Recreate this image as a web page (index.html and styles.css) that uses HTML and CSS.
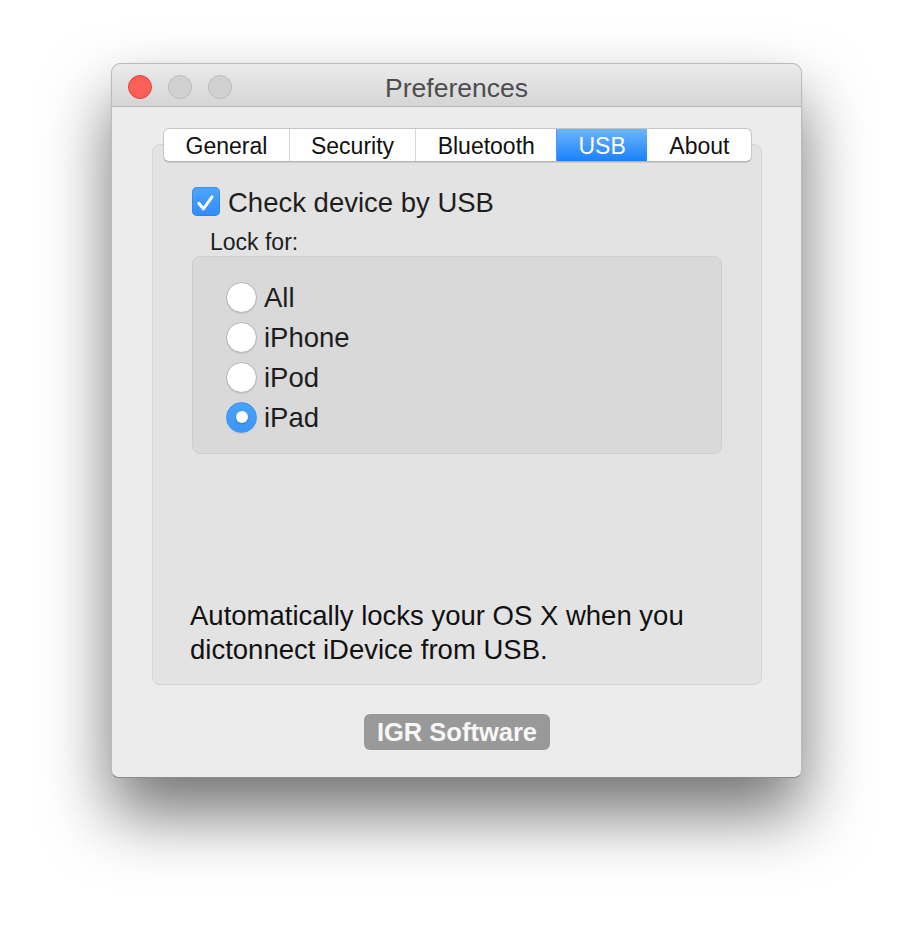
FILE: index.html
```html
<!DOCTYPE html>
<html>
<head>
<meta charset="utf-8">
<title>Preferences</title>
<link rel="stylesheet" href="styles.css">
</head>
<body>
<div class="window">
  <div class="titlebar">
    <div class="lights">
      <span class="light close"></span>
      <span class="light off"></span>
      <span class="light off"></span>
    </div>
    <div class="title">Preferences</div>
    <div class="spacer"></div>
  </div>
  <div class="content">
    <div class="tabs">
      <div class="tab">General</div>
      <div class="tab">Security</div>
      <div class="tab">Bluetooth</div>
      <div class="tab active">USB</div>
      <div class="tab">About</div>
    </div>
    <div class="panel">
      <div class="check-row">
        <span class="checkbox">
          <svg viewBox="0 0 28 28" width="28" height="28"><path d="M6.8 16.3 L11.4 21.8 L20 9.8" fill="none" stroke="#fff" stroke-width="3" stroke-linecap="round" stroke-linejoin="round"/></svg>
        </span>
        <span class="check-label">Check device by USB</span>
      </div>
      <div class="lock-label">Lock for:</div>
      <div class="group">
        <div class="radio-row"><span class="radio"></span><span>All</span></div>
        <div class="radio-row"><span class="radio"></span><span>iPhone</span></div>
        <div class="radio-row"><span class="radio"></span><span>iPod</span></div>
        <div class="radio-row"><span class="radio selected"></span><span>iPad</span></div>
      </div>
      <p class="desc">Automatically locks your OS X when you<br>dictonnect iDevice from USB.</p>
    </div>
    <div class="brand">IGR Software</div>
  </div>
</div>
</body>
</html>
```
FILE: styles.css
```css
* { box-sizing: border-box; }

html, body {
  margin: 0;
  background: #ffffff;
  min-height: 100%;
}

html {
  height: 100%;
}

body {
  height: 100%;
  min-height: 938px;
  padding: 63px 0 0 111px;
  font-family: "Liberation Sans", Arial, Helvetica, sans-serif;
  color: #1e1e1e;
}

.window {
  width: 691px;
  height: 715px;
  background: #ececec;
  border: 1px solid #bcbcbc;
  border-bottom-color: #8c8c8c;
  border-radius: 10px 10px 8px 8px;
  box-shadow: 0 36px 66px rgba(0, 0, 0, 0.55), 0 0 1px rgba(0, 0, 0, 0.2);
  display: flex;
  flex-direction: column;
  overflow: hidden;
}

.titlebar {
  height: 43px;
  flex: none;
  background: linear-gradient(#ebebeb, #d5d5d5);
  border-bottom: 1px solid #b6b6b6;
  display: grid;
  grid-template-columns: 1fr auto 1fr;
  align-items: center;
}

.lights {
  display: flex;
  gap: 16px;
  padding-left: 16px;
}

.light {
  width: 24px;
  height: 24px;
  border-radius: 50%;
  display: block;
}

.light.close {
  background: #fc5f58;
  border: 1px solid #e0443e;
}

.light.off {
  background: #d1d1d1;
  border: 1px solid #bcbcbc;
}

.title {
  font-size: 26.5px;
  line-height: 42px;
  padding-top: 3px;
  color: #4d4d4d;
}

.content {
  flex: 1;
  display: flex;
  flex-direction: column;
  padding: 21px 39px 0 40px;
}

.tabs {
  align-self: center;
  display: flex;
  position: relative;
  z-index: 1;
  background: #fff;
  border: 1px solid #c5c5c5;
  border-bottom-color: #b3b3b3;
  border-radius: 6px;
  box-shadow: 0 1px 1px rgba(0, 0, 0, 0.1);
  overflow: hidden;
  height: 34px;
  margin-left: 1px;
}

.tab {
  font-size: 23px;
  line-height: 30px;
  padding: 2px 21.3px 0;
  color: #111;
  border-left: 1px solid #d8d8d8;
}

.tab:first-child {
  border-left: none;
}

.tab.active {
  background: linear-gradient(#6db5fb, #1a81fb);
  color: #fff;
  border-left-color: #4a9cf8;
}

.tab.active + .tab {
  border-left-color: transparent;
}

.panel {
  margin-top: -18px;
  height: 541px;
  background: #e3e3e3;
  border: 1px solid #d6d6d6;
  border-radius: 8px;
  padding: 41px 39px 17px 39px;
  display: flex;
  flex-direction: column;
}

.check-row {
  display: flex;
  align-items: center;
  height: 30px;
  gap: 8px;
}

.checkbox {
  width: 28px;
  height: 29px;
  border-radius: 5px;
  background: linear-gradient(#4fa6fd, #2f8cfa);
  box-shadow: inset 0 0 0 1px rgba(30, 110, 220, 0.35);
  display: block;
  flex: none;
}

.checkbox svg {
  display: block;
}

.check-label {
  font-size: 27.5px;
  line-height: 30px;
  padding-top: 3px;
}

.lock-label {
  margin: 11px 0 0 18px;
  font-size: 23px;
  line-height: 28px;
  padding-top: 1px;
}

.group {
  background: #d9d9d9;
  border: 1px solid #cfcfcf;
  border-radius: 8px;
  padding: 20px 0 16px 33px;
}

.radio-row {
  display: flex;
  align-items: center;
  height: 40px;
  gap: 7px;
  font-size: 27.5px;
}

.radio-row span:last-child {
  padding-top: 2px;
}

.radio {
  width: 31px;
  height: 31px;
  border-radius: 50%;
  background: #fff;
  border: 1px solid #b3b3b3;
  box-shadow: 0 1px 1px rgba(0, 0, 0, 0.08);
  flex: none;
  display: flex;
  align-items: center;
  justify-content: center;
}

.radio.selected {
  background: linear-gradient(#4aa2fd, #3a96fb);
  border-color: #3a92f2;
}

.radio.selected::after {
  content: "";
  width: 12px;
  height: 12px;
  border-radius: 50%;
  background: #fff;
  box-shadow: 0 1px 2px rgba(0, 0, 0, 0.25);
}

.desc {
  margin: auto 0 0 -2px;
  font-size: 27.5px;
  line-height: 34px;
  padding-top: 1px;
  color: #111;
}

.brand {
  align-self: center;
  margin: 29px 0 0 0;
  height: 36px;
  padding: 0 13px;
  background: #999999;
  border-radius: 6px;
  color: #f7f7f7;
  font-weight: bold;
  font-size: 25.5px;
  line-height: 37px;
}
```
